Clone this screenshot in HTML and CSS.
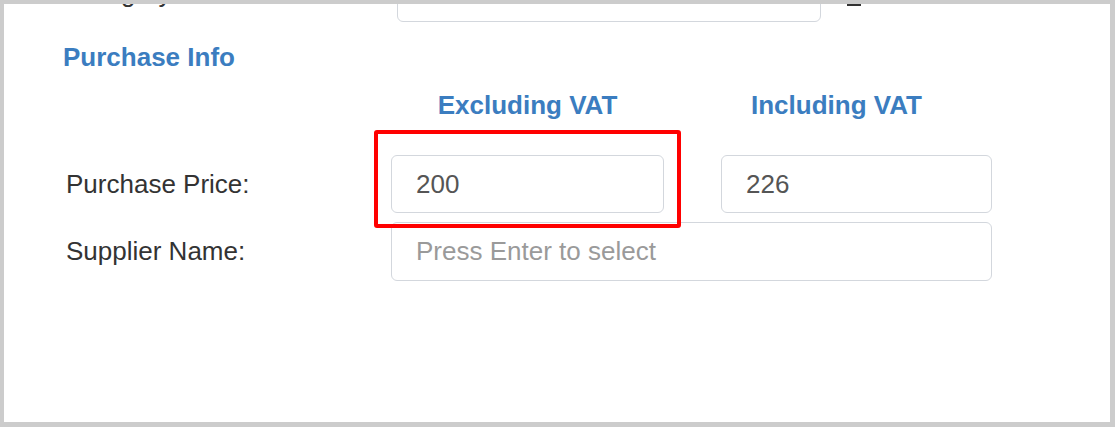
FILE: index.html
```html
<!DOCTYPE html>
<html>
<head>
<meta charset="utf-8">
<link rel="stylesheet" href="styles.css">
</head>
<body>
<div class="frame">
  <div class="cat-row">
    <span class="label cat-label">Category:</span>
    <div class="input cat-input"></div>
    <span class="cat-mark"></span>
  </div>
  <div class="section-title">Purchase Info</div>
  <div class="col-heads">
    <div class="col-head excl">Excluding VAT</div>
    <div class="col-head incl">Including VAT</div>
  </div>
  <div class="row price-row">
    <span class="label">Purchase Price:</span>
    <div class="field">
      <div class="input price-input">200</div>
      <div class="highlight"></div>
    </div>
    <div class="input price-input incl-input">226</div>
  </div>
  <div class="row supplier-row">
    <span class="label">Supplier Name:</span>
    <div class="input supplier-input placeholder">Press Enter to select</div>
  </div>
</div>
</body>
</html>
```

FILE: styles.css
```css
html, body {
  margin: 0;
  padding: 0;
  background: #ffffff;
}

.frame {
  box-sizing: border-box;
  width: 1115px;
  height: 427px;
  border-style: solid;
  border-color: #cccccc;
  border-width: 4px 5px 5px 4px;
  background: #ffffff;
  overflow: hidden;
  font-family: "Liberation Sans", Arial, sans-serif;
}

.cat-row {
  display: flex;
  align-items: center;
  height: 58px;
  margin-top: -40px;
}

.label {
  width: 387px;
  padding-left: 62px;
  box-sizing: border-box;
  font-size: 26px;
  color: #333333;
  flex: none;
}

.cat-label {
  width: 393px;
}

.input {
  box-sizing: border-box;
  height: 58px;
  border: 1px solid #d3d7dd;
  border-radius: 6px;
  background: #ffffff;
  padding-left: 24px;
  font-size: 26px;
  color: #555555;
  display: flex;
  align-items: center;
  flex: none;
}

.cat-input {
  width: 424px;
}

.cat-mark {
  align-self: flex-start;
  margin-top: 40px;
  margin-left: 26px;
  width: 14px;
  height: 2px;
  background: #333333;
}

.section-title {
  margin-top: 20px;
  padding-left: 59px;
  font-size: 26px;
  line-height: 30px;
  font-weight: bold;
  color: #3b7dc0;
}

.col-heads {
  display: flex;
  margin-top: 18px;
  font-size: 26px;
  line-height: 30px;
  font-weight: bold;
  color: #3b7dc0;
}

.col-head.excl {
  margin-left: 387px;
  width: 273px;
  text-align: center;
}

.col-head.incl {
  margin-left: 87px;
}

.row {
  display: flex;
  align-items: center;
}

.price-row {
  margin-top: 35px;
}

.supplier-row {
  margin-top: 9px;
}

.field {
  position: relative;
  flex: none;
}

.price-input {
  width: 273px;
}

.incl-input {
  width: 271px;
  margin-left: 57px;
}

.highlight {
  position: absolute;
  left: -17px;
  top: -25px;
  width: 307px;
  height: 98px;
  box-sizing: border-box;
  border: 4px solid #ff0000;
  border-radius: 3px;
}

.supplier-input {
  width: 601px;
  height: 59px;
}

.placeholder {
  color: #9a9a9a;
}
```
